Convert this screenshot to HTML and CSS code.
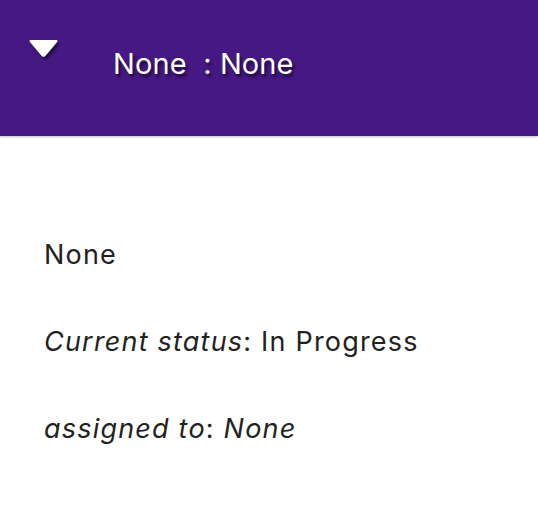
FILE: index.html
```html
<!DOCTYPE html>
<html>
<head>
<meta charset="utf-8">
<link rel="stylesheet" href="styles.css">
</head>
<body>
<header class="bar">
  <svg class="caret" width="34" height="26" viewBox="0 0 34 26">
    <defs>
      <filter id="sh" x="-30%" y="-30%" width="160%" height="180%">
        <feDropShadow dx="2" dy="3" stdDeviation="1.6" flood-color="#000" flood-opacity="0.55"/>
      </filter>
    </defs>
    <path d="M4 3 H29 Q31.5 3 30 5 L18.2 19 Q16.5 20.6 14.8 19 L3 5 Q1.5 3 4 3 Z" fill="#fff" filter="url(#sh)"/>
  </svg>
  <h1 class="title">None &nbsp;: None</h1>
</header>
<main class="content">
  <p class="line">None</p>
  <p class="line"><em>Current status</em>: In Progress</p>
  <p class="line"><em>assigned to</em>: <em>None</em></p>
</main>
</body>
</html>
```
FILE: styles.css
```css
html, body {
  margin: 0;
  padding: 0;
  background: #fff;
  font-family: Inter, "Noto Sans", sans-serif;
}
.bar {
  height: 136px;
  background: #461883;
  box-shadow: 0 1px 2px rgba(0,0,0,0.25);
  display: flex;
  align-items: flex-start;
  position: relative;
}
.caret {
  margin: 37px 0 0 27px;
  flex: none;
}
.title {
  margin: 44px 0 0 52px;
  font-size: 29px;
  font-weight: 400;
  letter-spacing: 0.1px;
  color: #fff;
  line-height: 40px;
  text-shadow: 2px 3px 3px rgba(0,0,0,0.6);
}
.content {
  padding: 99px 0 0 44px;
  color: #222;
}
.line {
  margin: 0 0 47px 0;
  font-size: 27px;
  letter-spacing: 1.2px;
  line-height: 40px;
}
```
